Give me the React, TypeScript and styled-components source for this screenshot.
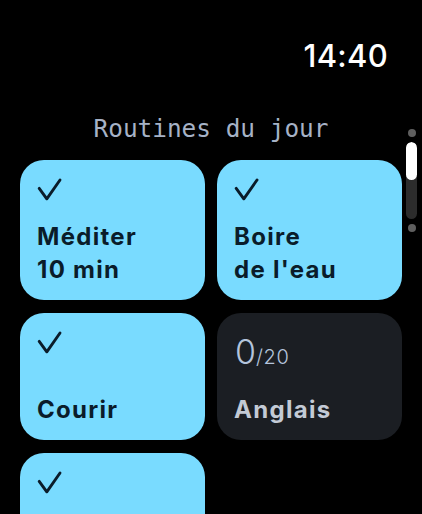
import React from "react";
import styled, { createGlobalStyle } from "styled-components";

const Global = createGlobalStyle`
  html, body { margin: 0; padding: 0; background: #000; }
  body { width: 422px; height: 514px; overflow: hidden; font-family: Inter, "Noto Sans", sans-serif; }
`;

const Screen = styled.div`
  position: relative;
  width: 422px;
  height: 514px;
  background: #000;
  overflow: hidden;
  display: flex;
  flex-direction: column;
`;

const StatusBar = styled.div`
  display: flex;
  justify-content: flex-end;
  padding: 38px 34px 0 0;
`;

const Time = styled.div`
  font-family: Inter, sans-serif;
  font-weight: 500;
  font-size: 31px;
  line-height: 36px;
  color: #fff;
  letter-spacing: 0.3px;
`;

const Title = styled.div`
  margin-top: 40px;
  text-align: center;
  font-family: "DejaVu Sans Mono", "Liberation Mono", monospace;
  font-size: 24.4px;
  line-height: 30px;
  color: #a6b2c6;
`;

const Grid = styled.div`
  margin-top: 16px;
  padding-left: 20px;
  display: grid;
  grid-template-columns: 185px 185px;
  column-gap: 12px;
  row-gap: 13px;
  align-items: start;
`;

const Card = styled.div<{ $done: boolean }>`
  box-sizing: border-box;
  min-height: 127px;
  border-radius: 24px;
  padding: 18px 18px 14px 17px;
  display: flex;
  flex-direction: column;
  justify-content: space-between;
  gap: 20px;
  background: ${(p) => (p.$done ? "#79dbff" : "#1b1e23")};
  color: ${(p) => (p.$done ? "#0a1c2a" : "#c3cad5")};
`;

const Check = styled.svg`
  display: block;
  width: 25px;
  height: 22px;
  overflow: visible;
`;

const Label = styled.div`
  font-family: Inter, sans-serif;
  font-weight: 650;
  font-size: 24px;
  line-height: 33px;
  letter-spacing: 1.3px;
  white-space: pre-line;
`;

const Counter = styled.div`
  margin-top: 4px;
  height: 22px;
  padding-left: 1px;
  font-family: Inter, sans-serif;
  line-height: 34px;
  color: #b4c4dc;
  white-space: nowrap;
`;

const Big = styled.span`
  font-size: 34px;
  font-weight: 300;
`;

const Small = styled.span`
  font-size: 20px;
  font-weight: 300;
  letter-spacing: 0.6px;
`;

const Scroll = styled.div`
  position: absolute;
  left: 406px;
  top: 129px;
  width: 11px;
  display: flex;
  flex-direction: column;
  align-items: center;
  gap: 5px;
`;

const Dot = styled.div`
  width: 8px;
  height: 8px;
  border-radius: 50%;
  background: #5f5f5f;
`;

const Track = styled.div`
  width: 11px;
  height: 77px;
  border-radius: 6px;
  background: #2c2c2c;
  overflow: hidden;
`;

const Thumb = styled.div`
  width: 11px;
  height: 38px;
  border-radius: 6px;
  background: #fff;
`;

const CheckIcon = () => (
  <Check viewBox="0 0 25 22">
    <path
      d="M2.2 10.4 L9.8 20.8 L23 2"
      fill="none"
      stroke="currentColor"
      strokeWidth="2.9"
      strokeLinecap="round"
      strokeLinejoin="round"
    />
  </Check>
);

type Routine = { id: string; label?: string; done: boolean; count?: number; goal?: number };

const routines: Routine[] = [
  { id: "med", label: "Méditer\n10 min", done: true },
  { id: "eau", label: "Boire\nde l'eau", done: true },
  { id: "run", label: "Courir", done: true },
  { id: "eng", label: "Anglais", done: false, count: 0, goal: 20 },
  { id: "more", done: true },
];

export default function App() {
  return (
    <>
      <Global />
      <Screen>
        <StatusBar>
          <Time>14:40</Time>
        </StatusBar>
        <Title>Routines du jour</Title>
        <Grid>
          {routines.map((r) => (
            <Card key={r.id} $done={r.done}>
              {r.done ? (
                <CheckIcon />
              ) : (
                <Counter>
                  <Big>{r.count}</Big>
                  <Small>/{r.goal}</Small>
                </Counter>
              )}
              {r.label && <Label>{r.label}</Label>}
            </Card>
          ))}
        </Grid>
        <Scroll>
          <Dot />
          <Track>
            <Thumb />
          </Track>
          <Dot />
        </Scroll>
      </Screen>
    </>
  );
}
